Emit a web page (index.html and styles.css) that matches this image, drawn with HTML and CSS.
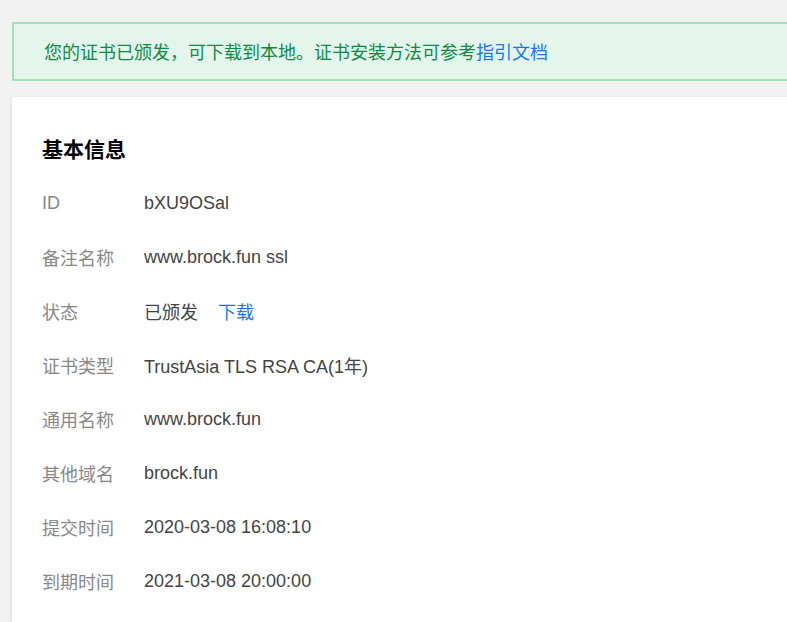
FILE: index.html
```html
<!DOCTYPE html>
<html lang="zh-CN">
<head>
<meta charset="utf-8">
<link rel="stylesheet" href="styles.css">
</head>
<body>
<div class="page">
  <div class="alert">您的证书已颁发，可下载到本地。证书安装方法可参考<a class="link" href="#">指引文档</a></div>
  <div class="card">
    <h2 class="title">基本信息</h2>
    <div class="row"><span class="label">ID</span><span class="value">bXU9OSal</span></div>
    <div class="row"><span class="label">备注名称</span><span class="value">www.brock.fun ssl</span></div>
    <div class="row"><span class="label">状态</span><span class="value">已颁发<a class="link dl" href="#">下载</a></span></div>
    <div class="row"><span class="label">证书类型</span><span class="value">TrustAsia TLS RSA CA(1年)</span></div>
    <div class="row"><span class="label">通用名称</span><span class="value">www.brock.fun</span></div>
    <div class="row"><span class="label">其他域名</span><span class="value">brock.fun</span></div>
    <div class="row"><span class="label">提交时间</span><span class="value">2020-03-08 16:08:10</span></div>
    <div class="row"><span class="label">到期时间</span><span class="value">2021-03-08 20:00:00</span></div>
  </div>
</div>
</body>
</html>
```
FILE: styles.css
```css
html, body {
  margin: 0;
  padding: 0;
  background: #f2f2f2;
  overflow: hidden;
  height: 100%;
}
body {
  font-family: "Liberation Sans", "Noto Sans CJK SC", sans-serif;
  font-size: 18px;
}
.page {
  box-sizing: border-box;
  height: 100%;
  padding: 22px 0 0 12px;
  display: flex;
  flex-direction: column;
}
.alert {
  border: 2px solid #9fe3bb;
  border-right: none;
  background: #e4f6ec;
  color: #0f8a45;
  height: 55px;
  line-height: 55px;
  padding-left: 30px;
  font-family: "Noto Sans CJK SC", sans-serif;
}
.link {
  color: #1677f0;
  text-decoration: none;
}
.card {
  flex: 1;
  margin-top: 16px;
  background: #fff;
  box-shadow: 0 1px 4px rgba(0,0,0,0.12);
  padding: 24px 0 0 30px;
  overflow: hidden;
}
.title {
  margin: 0;
  height: 55px;
  line-height: 55px;
  font-size: 21px;
  font-weight: bold;
  color: #000;
  font-family: "Noto Sans CJK SC", sans-serif;
}
.row {
  display: flex;
  height: 54px;
  align-items: center;
}
.label {
  width: 102px;
  color: #888;
}
.value {
  color: #444;
}
.dl {
  margin-left: 20px;
}
```
